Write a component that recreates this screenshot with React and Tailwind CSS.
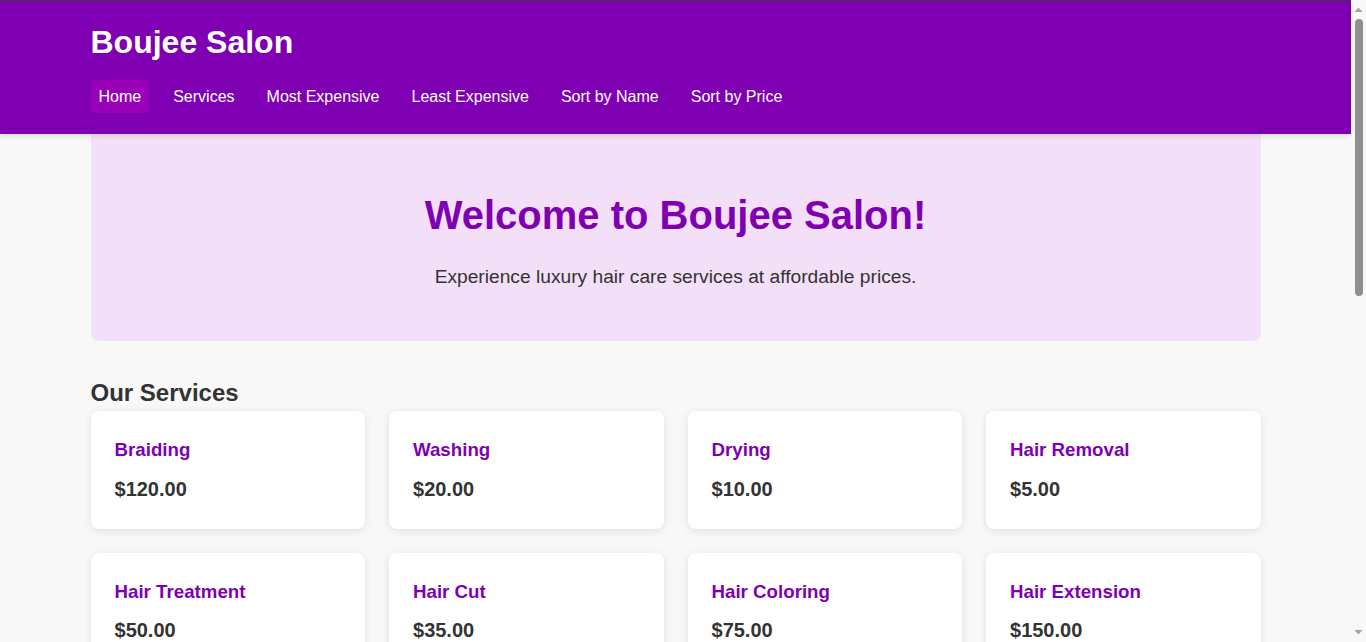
import React from "react";

const services = [
  { name: "Braiding", price: 120 },
  { name: "Washing", price: 20 },
  { name: "Drying", price: 10 },
  { name: "Hair Removal", price: 5 },
  { name: "Hair Treatment", price: 50 },
  { name: "Hair Cut", price: 35 },
  { name: "Hair Coloring", price: 75 },
  { name: "Hair Extension", price: 150 },
  { name: "Manicure", price: 25 },
  { name: "Pedicure", price: 30 },
  { name: "Facial", price: 45 },
  { name: "Scalp Massage", price: 15 },
];

const navItems = [
  "Home",
  "Services",
  "Most Expensive",
  "Least Expensive",
  "Sort by Name",
  "Sort by Price",
];

function ScrollBar() {
  return (
    <div className="fixed right-0 top-0 z-50 flex h-screen w-[15px] flex-col items-center bg-[#f8f8f8]">
      <svg width="15" height="17" viewBox="0 0 15 17" className="shrink-0">
        <path d="M3.5 12 L7.5 7.5 L11.5 12 Z" fill="#a3a3a3" />
      </svg>
      <div className="mt-[2px] h-[277px] w-[8px] rounded-full bg-[#8f8f8f]" />
      <div className="flex-1" />
      <svg width="15" height="17" viewBox="0 0 15 17" className="shrink-0">
        <path d="M3.5 5 L7.5 9.5 L11.5 5 Z" fill="#a3a3a3" />
      </svg>
    </div>
  );
}

export default function App() {
  return (
    <div
      className="min-h-screen bg-[#f8f8f8] pr-[15px] text-[#333333]"
      style={{ fontFamily: '"Liberation Sans", Arial, sans-serif' }}
    >
      <ScrollBar />
      <header className="relative z-10 border-t border-[#3c3c3c] bg-[#7f00b2] shadow-[0_2px_5px_rgba(0,0,0,0.12)]">
        <div className="mx-auto max-w-[1170px] pt-[23px] pb-[21px]">
          <h1 className="text-[32px] font-bold leading-[37px] text-white">
            Boujee Salon
          </h1>
          <nav className="mt-[19px] flex gap-4">
            {navItems.map((item, i) => (
              <a
                key={item}
                href="#"
                className={
                  i === 0
                    ? "flex h-[33px] items-center rounded-[4px] bg-[#9a00b8] px-2 text-[16px] text-white"
                    : "flex h-[33px] items-center rounded-[4px] px-2 text-[16px] text-white"
                }
              >
                {item}
              </a>
            ))}
          </nav>
        </div>
      </header>

      <main className="mx-auto max-w-[1170px] pb-[40px]">
        <section className="rounded-b-lg bg-[#f3e0f8] pt-[58px] pb-[53px] text-center">
          <h2 className="text-[40px] font-bold leading-[46px] text-[#7f00b2]">
            Welcome to Boujee Salon!
          </h2>
          <p className="mt-[28px] text-[19.2px] leading-[22px] text-[#333333]">
            Experience luxury hair care services at affordable prices.
          </p>
        </section>

        <h2 className="mt-[38px] text-[24px] font-bold leading-[28px] text-[#333333]">
          Our Services
        </h2>

        <div className="mt-[4px] grid grid-cols-4 gap-6">
          {services.map((s) => (
            <div
              key={s.name}
              className="rounded-lg bg-white px-6 pt-[28px] pb-[28px] shadow-[0_2px_8px_rgba(0,0,0,0.1)]"
            >
              <h3 className="text-[18.72px] font-bold leading-[21.5px] text-[#7f00b2]">
                {s.name}
              </h3>
              <p className="mt-[17px] text-[20px] font-bold leading-[23px] text-[#333333]">
                ${s.price.toFixed(2)}
              </p>
            </div>
          ))}
        </div>
      </main>

      <footer className="mt-[200px] bg-[#7f00b2] py-8 text-center text-white">
        <p className="text-[16px]">© 2024 Boujee Salon. All rights reserved.</p>
      </footer>
    </div>
  );
}
